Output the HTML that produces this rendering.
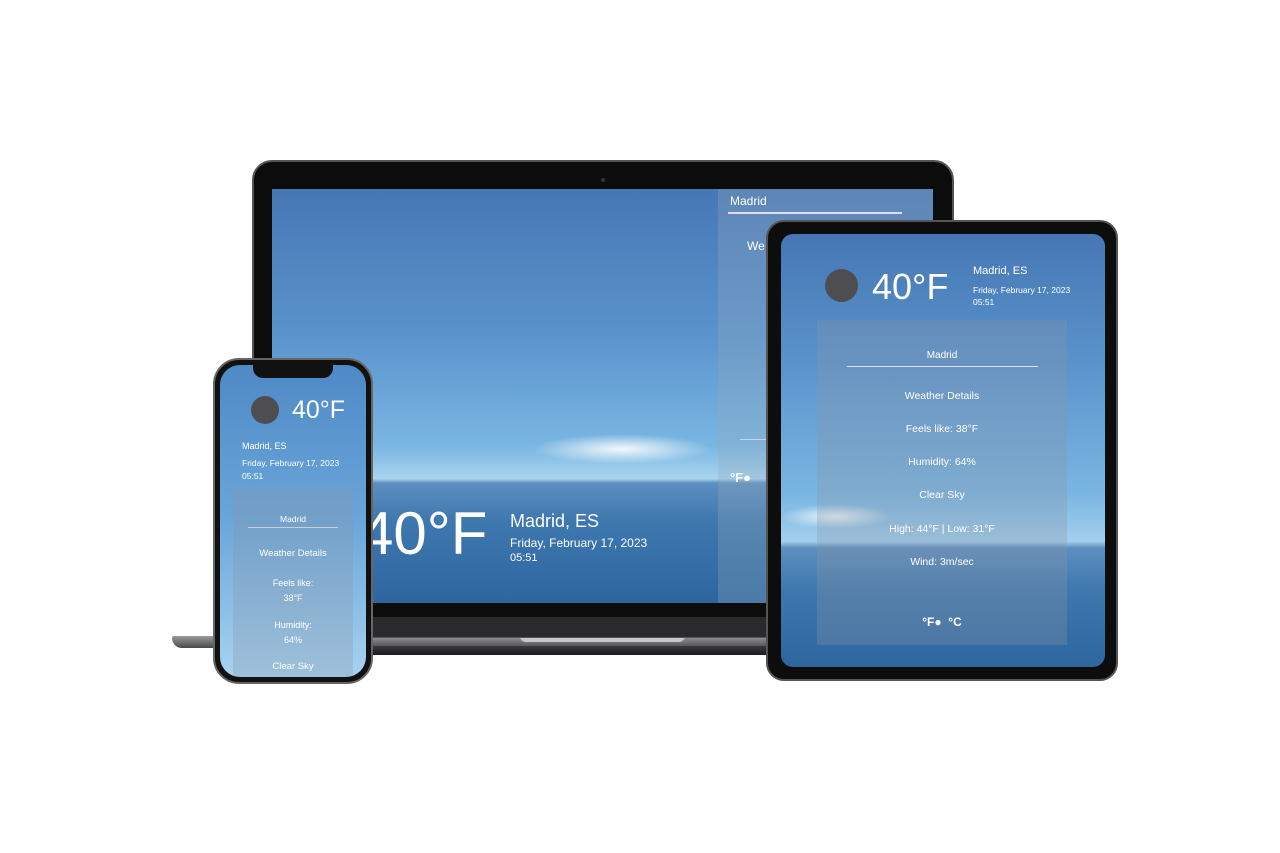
<!DOCTYPE html>
<html><head><meta charset="utf-8"><style>
*{margin:0;padding:0;box-sizing:border-box}
body{width:1280px;height:853px;background:#fff;position:relative;overflow:hidden;font-family:"Liberation Sans",sans-serif;color:#fff}
.a{position:absolute}
.t{position:absolute;white-space:nowrap;color:#fff}
.sea{background:linear-gradient(180deg,#4677b4 0%,#5a93cc 35%,#7ab6e2 62%,#a9d4ef 70%,#5d8fbf 71%,#3f78af 80%,#2d669f 100%)}
</style></head><body>
<!-- laptop base -->
<div class="a" style="left:172px;top:636px;width:930px;height:12px;background:linear-gradient(#9a9a9c,#4a4a4c);border-radius:2px 2px 10px 10px"></div>
<div class="a" style="left:230px;top:646px;width:840px;height:9px;background:linear-gradient(#3a3a3c,#1c1c1e);border-radius:0 0 40px 40px"></div>
<div class="a" style="left:520px;top:636px;width:165px;height:6px;background:#c8c8ca;border-radius:0 0 6px 6px"></div>
<!-- laptop lid -->
<div class="a" style="left:252px;top:160px;width:702px;height:478px;background:#0c0c0c;border-radius:20px 20px 4px 4px;border:2px solid #555"></div>
<div class="a" style="left:254px;top:617px;width:698px;height:20px;background:#2a2a2c"></div>
<div class="a" style="left:601px;top:178px;width:4px;height:4px;border-radius:50%;background:#333"></div>
<div class="a sea" style="left:272px;top:189px;width:661px;height:414px;overflow:hidden">
 <div class="a" style="left:260px;top:245px;width:180px;height:30px;background:radial-gradient(ellipse at center,rgba(255,255,255,.9),rgba(255,255,255,0) 70%)"></div>
 <div class="t" style="left:88px;top:314px;font-size:60px;line-height:62px">40°F</div>
 <div class="t" style="left:238px;top:322px;font-size:18px">Madrid, ES</div>
 <div class="t" style="left:238px;top:347px;font-size:12px">Friday, February 17, 2023</div>
 <div class="t" style="left:238px;top:363px;font-size:11px">05:51</div>
 <div class="a" style="left:446px;top:0;width:215px;height:414px;background:rgba(150,170,190,.3)"></div>
 <div class="t" style="left:458px;top:5px;font-size:12px">Madrid</div>
 <div class="a" style="left:456px;top:23px;width:174px;height:2px;background:#dde"></div>
 <div class="t" style="left:475px;top:50px;font-size:12px">We</div>
 <div class="a" style="left:468px;top:250px;width:30px;height:1px;background:rgba(255,255,255,.5)"></div>
 <div class="t" style="left:458px;top:281px;font-size:13px;font-weight:bold">°F●</div>
</div>
<!-- phone -->
<div class="a" style="left:213px;top:358px;width:160px;height:326px;background:#111;border-radius:26px;border:2px solid #666"></div>
<div class="a" style="left:220px;top:365px;width:146px;height:312px;border-radius:20px;overflow:hidden;background:linear-gradient(180deg,#4f89c6 0%,#6aa6da 50%,#a7d3f0 100%)">
 <div class="a" style="left:33px;top:0;width:80px;height:13px;background:#111;border-radius:0 0 10px 10px"></div>
 <div class="a" style="left:31px;top:31px;width:28px;height:28px;border-radius:50%;background:#4e4e50"></div>
 <div class="t" style="left:72px;top:31px;font-size:25px">40°F</div>
 <div class="t" style="left:22px;top:76px;font-size:9px">Madrid, ES</div>
 <div class="t" style="left:22px;top:93px;font-size:8.5px">Friday, February 17, 2023</div>
 <div class="t" style="left:22px;top:106px;font-size:8.5px">05:51</div>
 <div class="a" style="left:13px;top:123px;width:120px;height:200px;background:rgba(140,150,165,.3)"></div>
 <div class="t" style="left:0;width:146px;text-align:center;top:149px;font-size:8.5px">Madrid</div>
 <div class="a" style="left:28px;top:162px;width:90px;height:1px;background:#ccd"></div>
 <div class="t" style="left:0;width:146px;text-align:center;top:183px;font-size:9.5px">Weather Details</div>
 <div class="t" style="left:0;width:146px;text-align:center;top:211px;font-size:9px;line-height:15px">Feels like:<br>38°F</div>
 <div class="t" style="left:0;width:146px;text-align:center;top:253px;font-size:9px;line-height:15px">Humidity:<br>64%</div>
 <div class="t" style="left:0;width:146px;text-align:center;top:296px;font-size:9.5px">Clear Sky</div>
</div>
<!-- tablet -->
<div class="a" style="left:766px;top:220px;width:352px;height:461px;background:#0d0d0d;border-radius:18px;border:2px solid #555"></div>
<div class="a" style="left:781px;top:234px;width:324px;height:433px;border-radius:12px;overflow:hidden;background:linear-gradient(180deg,#4677b4 0%,#5a93cc 30%,#7ab6e2 60%,#a3cfee 71%,#5d8fbf 72.5%,#3f78af 82%,#2d669f 100%)">
 <div class="a" style="left:0;top:270px;width:110px;height:25px;background:radial-gradient(ellipse at center,rgba(255,255,255,.85),rgba(255,255,255,0) 70%)"></div>
 <div class="a" style="left:44px;top:35px;width:33px;height:33px;border-radius:50%;background:#4e4e50"></div>
 <div class="t" style="left:91px;top:32px;font-size:36px">40°F</div>
 <div class="t" style="left:192px;top:31px;font-size:11px">Madrid, ES</div>
 <div class="t" style="left:192px;top:51px;font-size:8.5px">Friday, February 17, 2023</div>
 <div class="t" style="left:192px;top:63px;font-size:8.5px">05:51</div>
 <div class="a" style="left:36px;top:86px;width:250px;height:325px;background:rgba(140,150,165,.3)"></div>
 <div class="t" style="left:36px;width:250px;text-align:center;top:116px;font-size:10px">Madrid</div>
 <div class="a" style="left:66px;top:132px;width:191px;height:1px;background:#dde"></div>
 <div class="t" style="left:36px;width:250px;text-align:center;top:156px;font-size:10.5px">Weather Details</div>
 <div class="t" style="left:36px;width:250px;text-align:center;top:189px;font-size:10.5px">Feels like: 38°F</div>
 <div class="t" style="left:36px;width:250px;text-align:center;top:222px;font-size:10.5px">Humidity: 64%</div>
 <div class="t" style="left:36px;width:250px;text-align:center;top:255px;font-size:10.5px">Clear Sky</div>
 <div class="t" style="left:36px;width:250px;text-align:center;top:289px;font-size:10.5px">High: 44°F | Low: 31°F</div>
 <div class="t" style="left:36px;width:250px;text-align:center;top:322px;font-size:10.5px">Wind: 3m/sec</div>
 <div class="t" style="left:36px;width:250px;text-align:center;top:381px;font-size:12px;font-weight:bold">°F● &nbsp;°C</div>
</div>
</body></html>
